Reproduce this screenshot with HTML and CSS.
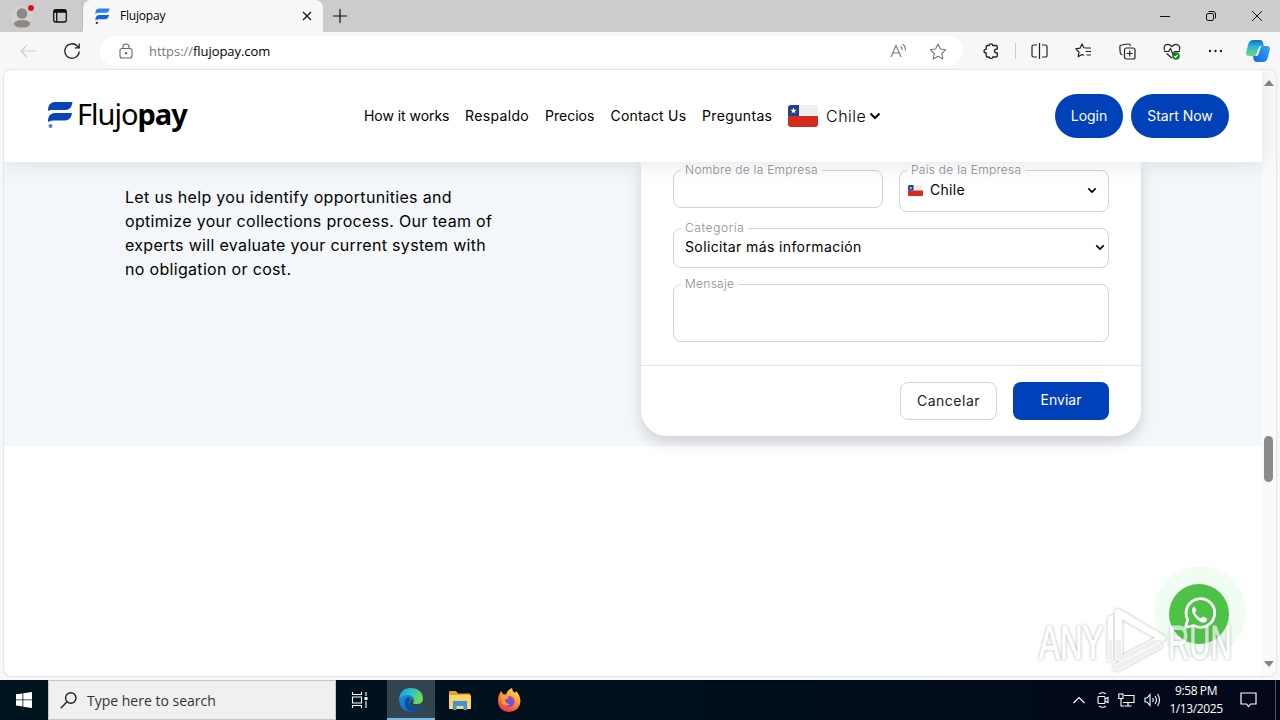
FILE: index.html
```html
<!DOCTYPE html>
<html lang="es">
<head>
  <meta charset="UTF-8">
  <title>Flujopay</title>
  <link rel="stylesheet" href="styles.css">
</head>
<body>
  <svg class="defs" width="0" height="0">
    <symbol id="flag" viewBox="0 0 30 22">
      <path fill="#eee" d="M3 0h24q3 0 3 3v8H0V3q0-3 3-3z"/>
      <path fill="#d52b1e" d="M0 11h30v8q0 3-3 3H3q-3 0-3-3z"/>
      <path fill="#22408c" d="M3 0h8v11H0V3q0-3 3-3z"/>
      <path fill="#fff" d="M5.500 2.500l.8 2.300h2.400L6.800 6.200l.7 2.300-2-1.400-2 1.400.7-2.300-1.900-1.400h2.400z"/>
    </symbol>
    <symbol id="chevron" viewBox="0 0 12 8">
      <path d="M1.500 1.500L6 6l4.500-4.500" fill="none" stroke="currentColor" stroke-width="2"/>
    </symbol>
  </svg>

  <div class="titlebar">
    <div class="title-left">
      <svg class="avatar" width="24" height="28" viewBox="0 0 24 28">
        <circle cx="11" cy="15" r="11" fill="#d3d0ce"/>
        <circle cx="11" cy="11.500" r="5.300" fill="#8b8886"/>
        <path d="M3 22c0-3 4-4 8-4s8 1 8 4c-1 3-4 3.500-8 3.500S4 25 3 22z" fill="#8b8886"/>
        <circle cx="20" cy="6" r="3" fill="#e00b1c"/>
      </svg>
      <svg class="tabs-icon" width="16" height="16" viewBox="0 0 16 16" fill="none" stroke="#111" stroke-width="1.300">
        <rect x="1.700" y="1.700" width="12.600" height="12.300" rx="2"/>
        <path d="M2 4h12M4.700 4v10" /><path d="M2 3h12" stroke-width="2"/>
      </svg>
    </div>
    <div class="tab">
      <svg width="15" height="16" viewBox="0 0 24 27" class="favicon">
        <path fill="#2684f5" d="M0 10C0 3 3 1 8 1h16c-1 5-3 7-7 7H8c-4 0-6 0-8 2z"/>
        <path fill="#1763df" d="M0 21c0-7 3-9 8-9h15c-1 5-3 7-7 7H8c-4 0-6 0-8 2z"/>
        <circle cx="2.500" cy="25" r="2" fill="#163b83"/>
      </svg>
      <span class="tab-title">Flujopay</span>
      <svg width="10" height="10" viewBox="0 0 10 10" stroke="#111" stroke-width="1.200"><path d="M1 1l8 8M9 1L1 9"/></svg>
    </div>
    <svg class="new-tab" width="14" height="14" viewBox="0 0 14 14" stroke="#111" stroke-width="1.200"><path d="M7 0v14M0 7h14"/></svg>
    <div class="window-buttons">
      <svg width="10" height="10" viewBox="0 0 10 10" stroke="#111"><path d="M0 5.500h10"/></svg>
      <svg width="10" height="10" viewBox="0 0 10 10" fill="none" stroke="#111"><rect x=".5" y="2.500" width="7" height="7" rx="1.500"/><path d="M2.500.5H7q2.500 0 2.500 2.500v4.500"/></svg>
      <svg width="10" height="10" viewBox="0 0 10 10" stroke="#111"><path d="M0 0l10 10M10 0L0 10"/></svg>
    </div>
  </div>

  <div class="toolbar">
    <svg class="back" width="16" height="14" viewBox="0 0 16 14" fill="none" stroke="#cdcdcd" stroke-width="1.200"><path d="M16 7H1M7 1L1 7l6 6"/></svg>
    <svg class="reload" width="18" height="18" viewBox="0 0 18 18" fill="none" stroke="#222" stroke-width="1.300"><path d="M16.300 9.500A7.300 7.300 0 1 1 14.300 4l1.900 1.700M16.200 1.500v4.300h-4.400"/></svg>
    <div class="address">
      <svg class="lock" width="14" height="16" viewBox="0 0 14 16" fill="none" stroke="#666" stroke-width="1.100"><rect x="1" y="5.500" width="12" height="9.500" rx="2"/><path d="M4 5.500V4a3 3 0 0 1 6 0v1.500"/><circle cx="7" cy="10.200" r=".7" fill="#666"/></svg>
      <span class="url"><span class="scheme">https://</span>flujopay.com</span>
      <svg class="read" width="18" height="16" viewBox="0 0 18 16" fill="none" stroke="#777" stroke-width="1.100"><path d="M1 14L6 2.500 11 14M2.800 10h6.400M10.500 3.200q2 1.500 1.500 4M12.500 1q3.500 2.500 2.800 6.500"/></svg>
      <svg class="star" width="18" height="17" viewBox="0 0 18 17" fill="none" stroke="#777" stroke-width="1.100" stroke-linejoin="round"><path d="M9 1l2.400 5 5.400.7-4 3.800 1 5.400L9 13.300l-4.800 2.600 1-5.400-4-3.800L6.600 6z"/></svg>
    </div>
    <div class="tools">
      <svg width="16" height="16" viewBox="0 0 16 16" fill="none" stroke="#222" stroke-width="1.300" stroke-linejoin="round"><path d="M4.500 2.500H6.300Q6.300.8 8 .8t1.700 1.700h3.300q1.300 0 1.300 1.300V6Q11.500 6 11.500 8t2.800 2v2.700q0 1.300-1.300 1.300H9.700q0 1.500-1.700 1.500T6.300 14H4.500Q3.200 14 3.200 12.700V10Q1 10 1 8.200t2.200-1.900V3.800q0-1.300 1.300-1.300z"/></svg>
      <i class="split"></i>
      <svg width="17" height="16" viewBox="0 0 17 16" fill="none" stroke="#222" stroke-width="1.200"><path d="M8.500 0v16M6 2H2.500Q1 2 1 3.500v9Q1 14 2.500 14H6M11 2h3.500Q16 2 16 3.500v9q0 1.500-1.500 1.500H11"/></svg>
      <svg width="17" height="16" viewBox="0 0 17 16" fill="none" stroke="#222" stroke-width="1.200" stroke-linejoin="round"><path d="M9 5L7 1 5 5.200l-4.300.7L4 9l-.8 4.600L7 11.500l2 1M9.500 5H16M10.500 8.500H16M11.500 12H16"/></svg>
      <svg width="17" height="17" viewBox="0 0 17 17" fill="none" stroke="#222" stroke-width="1.200"><rect x="5.500" y="5" width="10.500" height="11" rx="2"/><path d="M10.700 7.500v6M7.700 10.500h6M3.300 12Q1.500 11.500 1.200 9.500L.8 4Q.7 2.200 2.500 2L9 1q2-.2 2.500 1.800"/></svg>
      <svg width="18" height="17" viewBox="0 0 18 17" fill="none" stroke="#222" stroke-width="1.200"><path d="M2 7.500Q0 4 2.500 2T9 3.500Q12 .2 15 2T16 7.500M1 8.500h4.500L7.500 5.500l2.500 6 1.500-3H17M3.500 10.500L9 15"/><circle cx="13" cy="13" r="3.800" fill="#16831a" stroke="none"/><path d="M11.300 13.200l1.200 1.200 2.300-2.600" stroke="#fff"/></svg>
      <svg width="15" height="4" viewBox="0 0 15 4" fill="#222"><circle cx="2" cy="2" r="1.200"/><circle cx="7.500" cy="2" r="1.200"/><circle cx="13" cy="2" r="1.200"/></svg>
      <svg class="copilot" width="24" height="23" viewBox="0 0 24 23">
        <defs>
          <linearGradient id="cp1" x1="0" y1="0" x2="0" y2="1"><stop offset="0" stop-color="#1668c7"/><stop offset=".4" stop-color="#29b5dc"/><stop offset="1" stop-color="#6bdc76"/></linearGradient>
          <linearGradient id="cp2" x1="1" y1="0" x2="0" y2="1"><stop offset="0" stop-color="#3aa3f5"/><stop offset="1" stop-color="#1267e8"/></linearGradient>
        </defs>
        <path fill="url(#cp2)" d="M16 6h5q3.500 0 2.700 4l-2 8Q20.500 22 17 22h-6q-3 0-3.500-3L7 16h3q2 0 2.700-2.500L14.500 8q.5-2 1.500-2z"/>
        <path fill="url(#cp1)" d="M7.500 0H14q2.600 0 3.200 3l.6 3H15q-2 0-2.700 2.500l-1.700 5.500Q10 16 8.500 16H3q-3.500 0-2.700-4l2-8Q3.500 0 7.500 0z"/>
      </svg>
    </div>
  </div>

  <div class="frame">
    <div class="page">
      <header class="header">
        <div class="brand">
          <svg width="25" height="27" viewBox="0 0 25 27">
            <path fill="#0a44b9" d="M0 10C0 3 3 1 8 1h16.500c-1 6-3 8-8 8H8c-4 0-6-.5-8 1z"/>
            <path fill="#0a44b9" d="M0 21c0-7 3-9 8-9h16c-1 5.500-3 7.500-8 7.500H8c-4 0-6 0-8 1.500z"/>
            <circle cx="2.500" cy="25" r="2" fill="#4f7fdc"/>
          </svg>
          <span class="brand-name">Flujo<b>pay</b></span>
        </div>
        <nav class="nav">
          <a class="n1">How it works</a>
          <a class="n2">Respaldo</a>
          <a class="n3">Precios</a>
          <a class="n4">Contact Us</a>
          <a class="n5">Preguntas</a>
          <div class="country">
            <svg width="30" height="22"><use href="#flag"/></svg>
            <span>Chile</span>
            <svg width="12" height="8"><use href="#chevron"/></svg>
          </div>
        </nav>
        <div class="actions">
          <a class="pill login">Login</a>
          <a class="pill start">Start Now</a>
        </div>
      </header>

      <section class="contact">
        <p class="intro">
          <span>Let us help you identify opportunities and</span>
          <span>optimize your collections process. Our team of</span>
          <span>experts will evaluate your current system with</span>
          <span>no obligation or cost.</span>
        </p>
        <form class="card">
          <div class="fields">
            <div class="row">
              <div class="field company"><label>Nombre de la Empresa</label></div>
              <div class="field land">
                <label>País de la Empresa</label>
                <svg width="15" height="11"><use href="#flag"/></svg>
                <span>Chile</span>
                <svg class="arrow" width="10" height="7"><use href="#chevron"/></svg>
              </div>
            </div>
            <div class="field category">
              <label>Categoría</label>
              <span>Solicitar más información</span>
              <svg class="arrow" width="10" height="7"><use href="#chevron"/></svg>
            </div>
            <div class="field message"><label>Mensaje</label></div>
          </div>
          <div class="card-footer">
            <div class="btn cancel"><span>Cancelar</span></div>
            <div class="btn send"><span>Enviar</span></div>
          </div>
        </form>
      </section>
    </div>
    <div class="scrollbar">
      <svg width="10" height="6" viewBox="0 0 10 6"><path d="M0 6L5 0l5 6z" fill="#858585"/></svg>
      <div class="thumb"></div>
      <svg width="10" height="6" viewBox="0 0 10 6"><path d="M0 0l5 6 5-6z" fill="#858585"/></svg>
    </div>
  </div>

  <div class="whatsapp">
    <svg width="60" height="60" viewBox="0 0 60 60">
      <circle cx="30" cy="30" r="30" fill="#4dc247"/>
      <path d="M16.500 43.500l2.200-8A14.300 14.300 0 1 1 24.500 41.500z" fill="none" stroke="#fff" stroke-width="2.800" stroke-linejoin="round"/>
      <path d="M25.500 22.500l2 4.300-1.600 2.300q2.300 4 6 5.500l2-2.200 4.200 2q.3 3.500-3.300 4.200Q31 39 26.500 33.500T23.300 25q.2-2 2.200-2.500z" fill="#fff"/>
    </svg>
  </div>

  <!-- recorder watermark -->
  <svg class="watermark" width="216" height="70" viewBox="0 0 216 70">
    <defs>
      <linearGradient id="wm" x1="0" y1="0" x2="0" y2="70" gradientUnits="userSpaceOnUse"><stop offset=".5" stop-color="#fff"/><stop offset=".5" stop-color="#e8e8e8"/></linearGradient>
    </defs>
    <g fill="url(#wm)" stroke="#fff" stroke-width="1">
      <text transform="translate(5 54) scale(.64 1)">ANY</text>
      <text transform="translate(134 54) scale(.6 1)">RUN</text>
      <path fill-rule="evenodd" d="M86 5q-2-2-5 1v48l6 3 43-22q3-2 0-4zM88 14l34 19-34 18z"/>
      <path d="M74 13l5-3v44l-5 3zM80 60l46-22 2 4-44 24-5-2z"/>
    </g>
  </svg>

  <div class="taskbar">
    <div class="start-btn">
      <svg width="16" height="16" viewBox="0 0 16 16" fill="#fff"><path d="M0 2.300l6.500-.9v6H0zM7.300 1.300L16 0v7.400H7.300zM0 8.200h6.500v6.300L0 13.600zM7.300 8.200H16V16l-8.700-1.200z"/></svg>
    </div>
    <div class="search">
      <svg width="17" height="17" viewBox="0 0 17 17" fill="none" stroke="#222" stroke-width="1.400"><circle cx="10.800" cy="6" r="5.200"/><path d="M7 9.700L.8 16.300"/></svg>
      <span>Type here to search</span>
    </div>
    <div class="task view">
      <svg width="18" height="16" viewBox="0 0 18 16" fill="none" stroke="#fff" stroke-width="1.100"><path d="M1.500 0v2.500h9V0M1.500 16v-2.500h9V16M1.500 5h9v6h-9zM15 0v4M15 9v7"/><rect x="13.500" y="5" width="3" height="3" fill="#fff" stroke="none"/></svg>
    </div>
    <div class="task active">
      <svg width="24" height="24" viewBox="0 0 24 24">
        <defs>
          <linearGradient id="e1" x1="0" y1="0" x2="1" y2=".4"><stop offset="0" stop-color="#199bd8"/><stop offset=".55" stop-color="#32c4c5"/><stop offset="1" stop-color="#6bdd54"/></linearGradient>
          <linearGradient id="e2" x1="0" y1="0" x2="1" y2="1"><stop offset="0" stop-color="#1b8fdd"/><stop offset="1" stop-color="#0f58ad"/></linearGradient>
        </defs>
        <path fill="url(#e2)" d="M0 11Q2 6 9 7q5 1 5 5-3 0-3.500 3 0 4 5.500 4.500 4 0 6.500-2Q19 24 12 24 1 23.500 0 11z"/>
        <path fill="#0d4c98" d="M9 9q-4 3-3 8 1.500 6 8 6.700 5.500-1 8.500-6.200-3 2-7 2-6-.5-6-5 .3-2.500 2.500-3z"/>
        <path fill="url(#e1)" d="M0 11.500Q1 0 12 0q11 .5 12 10 0 6-6 6-4 0-4-1.500 1.500-1.500.5-4Q12.500 7 8 7 2 7.500 0 11.500z"/>
      </svg>
    </div>
    <div class="task">
      <svg width="22" height="19" viewBox="0 0 22 19"><path fill="#e2a33a" d="M0 1q0-1 1-1h6l2 2.500h12V7H0z"/><path fill="#fdd26b" d="M0 4h21q1 0 1 1v13H0z"/><path fill="#4294d4" d="M4 10h14v9h-3.500v-4h-7v4H4z"/></svg>
    </div>
    <div class="task">
      <svg width="24" height="24" viewBox="0 0 24 24">
        <defs><linearGradient id="ff" x1=".8" y1="0" x2=".3" y2="1"><stop offset="0" stop-color="#ffe84a"/><stop offset=".45" stop-color="#ff962d"/><stop offset="1" stop-color="#f52e55"/></linearGradient></defs>
        <path fill="url(#ff)" d="M3 5l1-2 2 3 3 .5Q10 2 15 0q0 3 3 5l1-2q4 4 4.500 10-.5 10-11.500 11Q1 23 1 12q0-4 2-7z"/>
        <circle cx="12" cy="13.500" r="5.500" fill="#7850de"/>
        <path fill="#ff9d2d" d="M4 8q5-2 8 1-1 2-4 2.500Q8 16 13 16q-4 3-8 0z"/>
      </svg>
    </div>
    <div class="tray">
      <svg width="12" height="8" viewBox="0 0 12 8" fill="none" stroke="#fff" stroke-width="1.200"><path d="M.5 7L6 1.500 11.500 7"/></svg>
      <svg width="12" height="16" viewBox="0 0 12 16" fill="none" stroke="#fff" stroke-width="1.100"><rect x="1" y="4.500" width="7" height="7" rx="1"/><path d="M8 7l3-1.500v5L8 9M2 1.800q3.500-2 7 0M2 14.200q3.500 2 7 0"/></svg>
      <svg width="17" height="14" viewBox="0 0 17 14" fill="none" stroke="#fff" stroke-width="1.100"><path d="M6 2.500h10v7H5M10 9.500v3M6.500 13h7M3 6v7h3"/><rect x=".8" y="1" width="4.200" height="4.500"/></svg>
      <svg width="17" height="14" viewBox="0 0 17 14" fill="none" stroke="#fff" stroke-width="1.100"><path d="M1 5h2l3-3.500v11L3 9H1zM8.500 5q1.500 2 0 4M11 3q3 4 0 8M13.500 1q4 6 0 12"/></svg>
      <div class="clock"><span class="time">9:58 PM</span><span class="date">1/13/2025</span></div>
      <svg width="17" height="16" viewBox="0 0 17 16" fill="none" stroke="#fff" stroke-width="1.200"><path d="M1 1h15v11h-5.500L8.500 14.500 6.500 12H1z"/></svg>
      <i class="peek"></i>
    </div>
  </div>
</body>
</html>
```
FILE: styles.css
```css
* {
  box-sizing: border-box;
}
body {
  margin: 0;
  width: 1280px;
  height: 720px;
  overflow: hidden;
  display: flex;
  flex-direction: column;
  background: #f7f7f7;
  font-family: Inter, "Open Sans", sans-serif;
  color: #000;
}
svg {
  display: block;
  flex: none;
}
.defs {
  position: absolute;
}
span, a, label {
  white-space: nowrap;
}

/* browser window */
.titlebar {
  display: flex;
  height: 32px;
  background: #ccc;
  align-items: center;
}
.title-left {
  width: 83px;
  height: 32px;
  display: flex;
  border-right: 1px solid #bbb;
  border-radius: 0 0 6px 0;
}
.avatar {
  margin: 2px 0 0 11px;
}
.tabs-icon {
  margin: 8px 0 0 17px;
}
.tab {
  width: 240px;
  height: 32px;
  background: #f7f7f7;
  border-radius: 8px 8px 0 0;
  display: flex;
  align-items: center;
  padding: 0 11px 0 12px;
}
.tab-title {
  flex: 1;
  margin-left: 10px;
  font: 12px/16px "Open Sans", sans-serif;
  letter-spacing: -0.2px;
}
.new-tab {
  margin-left: 10px;
}
.window-buttons {
  margin-left: auto;
  margin-right: 18px;
  display: flex;
  gap: 36px;
}
.toolbar {
  height: 38px;
  display: flex;
  align-items: center;
  background: #f7f7f7;
}
.back {
  margin-left: 20px;
}
.reload {
  margin-left: 27px;
}
.address {
  margin-left: 19px;
  width: 863px;
  height: 30px;
  border-radius: 15px;
  background: #fff;
  display: flex;
  align-items: center;
  padding: 0 16px 0 19px;
}
.url {
  margin-left: 16px;
  flex: 1;
  font: 13px/18px "Open Sans", sans-serif;
  letter-spacing: -0.05px;
}
.scheme {
  color: #777;
}
.star {
  margin-left: 21px;
}
.tools {
  display: flex;
  align-items: center;
  gap: 27px;
  padding-left: 20px;
}
.split {
  width: 1px;
  height: 16px;
  margin: 0 -12px 0 -11px;
  background: #ccc;
}
.copilot {
  margin-left: -4px;
}
.frame {
  height: 606px;
  margin: 0 4px 4px;
  border-radius: 8px;
  background: #fff;
  box-shadow: 0 0 2px #bbb;
  display: flex;
  overflow: hidden;
}
.page {
  width: 1258px;
}
.scrollbar {
  width: 14px;
  background: #fafafa;
  display: flex;
  flex-direction: column;
  align-items: center;
  padding: 10px 1px 9px 0;
}
.thumb {
  width: 9px;
  height: 46px;
  margin: 350px 0 auto;
  border-radius: 5px;
  background: #8b8b8b;
}

/* site header */
.header {
  position: relative;
  z-index: 2;
  height: 92px;
  display: flex;
  align-items: center;
  background: #fff;
  padding: 0 33px 0 44px;
  box-shadow: 0 2px 22px rgba(0, 0, 0, 0.1);
}
.brand {
  display: flex;
  align-items: center;
  width: 316px;
  padding-bottom: 3px;
}
.brand-name {
  font: 29px/40px "Noto Sans", sans-serif;
  margin: -2px 0 0 4px;
  letter-spacing: -1px;
}
.nav {
  display: flex;
  align-items: center;
  gap: 16px;
  font-size: 14px;
}
.nav a {
  flex: none;
  padding-bottom: 1px;
}
.n1 { width: 85px; letter-spacing: -0.05px; }
.n2 { width: 64px; letter-spacing: 0.35px; }
.n3 { width: 49.500px; }
.n4 { width: 75.500px; letter-spacing: 0.2px; }
.n5 { width: 70px; letter-spacing: 0.35px; }
.country {
  display: flex;
  align-items: center;
  font-size: 16px;
  font-weight: 300;
}
.country span {
  width: 40px;
  margin: 0 3px 0 8px;
  padding-bottom: 1px;
  letter-spacing: 0.5px;
}
.actions {
  margin-left: auto;
  display: flex;
  gap: 8px;
}
.pill {
  height: 44px;
  border-radius: 22px;
  background: #0040b9;
  color: #fff;
  font-size: 14px;
  line-height: 44px;
  text-align: center;
}
.login { width: 68px; }
.start { width: 98px; }

/* contact section */
.contact {
  height: 284px;
  background: #f3f7fa;
  display: flex;
  justify-content: space-between;
  padding: 0 121px;
}
.intro {
  margin: 23px 0 0;
  font-size: 16px;
  line-height: 24px;
  letter-spacing: 0.32px;
}
.intro span {
  display: block;
}
.card {
  width: 500px;
  height: 274px;
  background: #fff;
  border-radius: 0 0 26px 26px;
  box-shadow: 0 6px 14px rgba(30, 20, 50, 0.17);
}
.fields {
  height: 204px;
  padding: 8px 32px 0;
  border-bottom: 1px solid #e2e3e6;
}
.row {
  display: flex;
  gap: 16px;
  align-items: flex-start;
}
.field {
  position: relative;
  border: 1px solid #d3d4d8;
  border-radius: 8px;
  display: flex;
  align-items: center;
  font-size: 14px;
}
.field label {
  position: absolute;
  top: -9px;
  left: 7px;
  padding: 0 4px;
  background: #fff;
  font-size: 12px;
  line-height: 16px;
  font-weight: 300;
  letter-spacing: 0.27px;
  color: #8b8c98;
}
.category label {
  letter-spacing: 0.6px;
}
.company {
  width: 210px;
  height: 38px;
}
.land {
  width: 210px;
  height: 42px;
  padding: 0 11px 2px 8px;
}
.land span {
  margin-left: 7px;
  padding-bottom: 1px;
  letter-spacing: 0.3px;
}
.arrow {
  margin-left: auto;
}
.category {
  height: 40px;
  margin-top: 16px;
  padding: 0 3px 1px 12px;
  letter-spacing: 0.38px;
}
.category > span {
  margin-left: -1px;
  padding-bottom: 2px;
}
.message {
  height: 58px;
  margin-top: 16px;
}
.card-footer {
  display: flex;
  justify-content: flex-end;
  gap: 16px;
  padding: 16px 32px;
}
.btn {
  height: 38px;
  border-radius: 8px;
  font-size: 14px;
  line-height: 36px;
  text-align: center;
}
.cancel {
  width: 97px;
  border: 1px solid #d3d4d8;
  color: #222;
  letter-spacing: 0.5px;
}
.send {
  width: 96px;
  background: #0040b9;
  color: #fff;
}
.whatsapp {
  position: absolute;
  left: 1169px;
  top: 584px;
  border-radius: 50%;
  box-shadow: 1px -2px 0 16px rgba(77, 220, 100, 0.08);
}
.watermark {
  position: absolute;
  left: 1034px;
  top: 605px;
  font: 49px "Liberation Sans", sans-serif;
  opacity: 0.65;
  filter: drop-shadow(0 0 1.500px #888);
}

/* taskbar */
.taskbar {
  height: 40px;
  display: flex;
  background: linear-gradient(90deg, #00141e, #00101c 50%, #040818);
  font-family: "Open Sans", sans-serif;
}
.start-btn {
  width: 48px;
  display: flex;
  align-items: center;
  justify-content: center;
}
.search {
  width: 288px;
  background: #f0f0f0;
  border: 1px solid #c6c6c6;
  display: flex;
  align-items: center;
  padding-left: 11px;
  font-size: 14px;
  color: #333;
}
.search span {
  margin-left: 10px;
}
.task {
  width: 49px;
  display: flex;
  align-items: center;
  justify-content: center;
}
.view {
  width: 48px;
  margin-right: 3px;
}
.active {
  width: 48px;
  background: #33464f;
  border-bottom: 2px solid #76b9ed;
  padding-top: 2px;
}
.tray {
  margin-left: auto;
  display: flex;
  align-items: center;
  color: #fff;
}
.tray > svg {
  margin-right: 9px;
}
.tray > svg:first-child {
  margin-right: 12px;
}
.clock {
  width: 56px;
  margin: 0 16px 0 -2px;
  display: flex;
  flex-direction: column;
  align-items: center;
  font-size: 12px;
  line-height: 18px;
  letter-spacing: -0.4px;
}
.peek {
  width: 1px;
  height: 40px;
  background: #555;
  margin: 0 4px 0 9px;
}
```
